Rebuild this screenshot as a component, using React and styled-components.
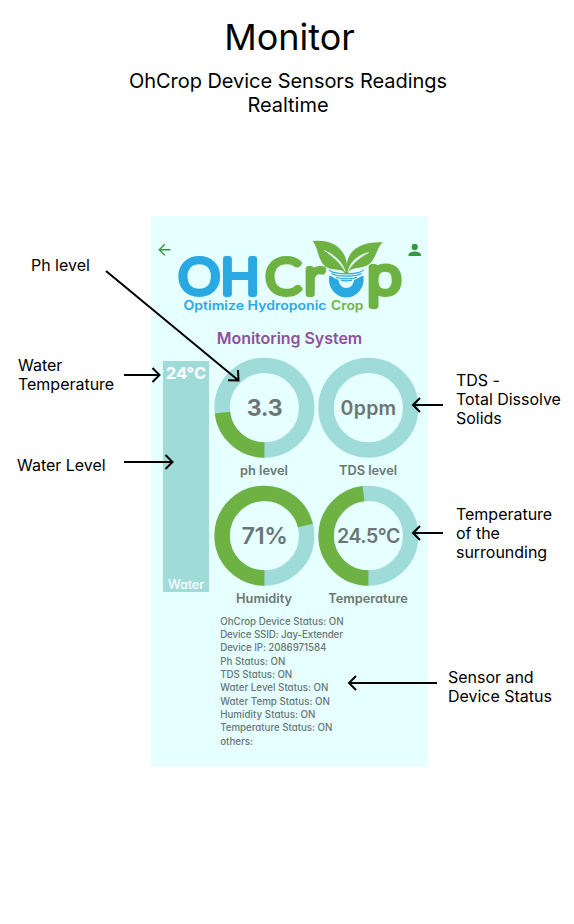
import React from "react";
import styled, { createGlobalStyle } from "styled-components";

const GlobalStyle = createGlobalStyle`
  * { box-sizing: border-box; }
  body { margin: 0; background: #fff; color: #000; font-family: Inter, sans-serif; }
`;

const Page = styled.main`
  position: relative;
  width: 574px;
  height: 924px;
  overflow: hidden;
  background: #fff;
`;

const Header = styled.header`
  height: 216px;
  padding: 15px 0 0 2px;
  text-align: center;
`;

const Title = styled.h1`
  margin: 0;
  font-size: 36px;
  line-height: 44px;
  font-weight: 400;
  text-indent: 3px;
`;

const Subtitle = styled.p`
  margin: 10px 0 0;
  font-size: 20px;
  line-height: 24px;
  letter-spacing: -0.04px;
`;

const Board = styled.div`
  display: grid;
  grid-template-columns: 151px 277px 146px;
`;

const Notes = styled.aside`
  display: flex;
  flex-direction: column;
`;

const Note = styled.p`
  margin: ${(p) => p.$top}px 0 0 ${(p) => p.$left}px;
  font-size: 16px;
  line-height: 19px;
  letter-spacing: -0.02px;
  white-space: pre;
`;

const Phone = styled.section`
  height: 551.4px;
  background: #e6ffff;
  color: #6a7675;
  font-feature-settings: "cv11";
  overflow: hidden;
`;

const TopBar = styled.div`
  height: 112px;
`;

const Heading = styled.h2`
  margin: 0;
  height: 29px;
  font-size: 16px;
  line-height: 20px;
  font-weight: 600;
  text-align: center;
  color: #91509c;
  letter-spacing: -0.05px;
`;

const Dashboard = styled.div`
  display: flex;
  padding-left: 12px;
`;

const Tank = styled.div`
  display: flex;
  flex-direction: column;
  justify-content: space-between;
  align-items: center;
  width: 46px;
  height: 231px;
  margin-top: 4.4px;
  background: #9fdbd9;
  color: #fff;
`;

const TankTemp = styled.strong`
  font-size: 16.6px;
  line-height: 24px;
  font-weight: 700;
`;

const TankLabel = styled.span`
  font-size: 12.6px;
  line-height: 15px;
  font-weight: 500;
`;

const Gauges = styled.div`
  display: grid;
  grid-template-columns: 104px 104px;
  grid-auto-rows: 128px;
  margin-left: 3px;
`;

const GaugeCell = styled.figure`
  margin: 0;
  display: flex;
  flex-direction: column;
  align-items: center;
`;

const Dial = styled.div`
  display: grid;
  place-items: center;
  width: 104px;
  height: 101px;
  flex: none;
  > * { grid-area: 1 / 1; }
`;

const Ring = styled.svg`
  overflow: visible;
`;

const Value = styled.span`
  padding: 1px 0 0 1px;
  font-size: ${(p) => p.$size}px;
  line-height: 28px;
  font-weight: ${(p) => p.$weight || 600};
  letter-spacing: ${(p) => p.$track || 0}px;
  white-space: nowrap;
`;

const Caption = styled.figcaption`
  margin-top: 4px;
  font-size: 12.8px;
  line-height: 18px;
  font-weight: 600;
  white-space: nowrap;
`;

const StatusList = styled.ul`
  margin: 1.6px 0 0 69.2px;
  padding: 0;
  list-style: none;
  font-size: 9.75px;
  line-height: 13.35px;
  font-weight: 500;
`;

const StatusLine = styled.li`
  letter-spacing: ${(p) => p.$track || 0}px;
`;

const Overlay = styled.svg`
  position: absolute;
  inset: 0;
  pointer-events: none;
`;

const GAUGES = [
  { value: "3.3", label: "ph level", sweep: 83, size: 23, weight: 700, track: -0.3 },
  { value: "0ppm", label: "TDS level", sweep: 0, size: 19.5, track: 0.3 },
  { value: "71%", label: "Humidity", sweep: 255.6, size: 23.5, track: -0.4 },
  { value: "24.5°C", label: "Temperature", sweep: 173, size: 19.5, track: -0.4 },
];

const STATUS = [
  { text: "OhCrop Device Status: ON", track: -0.01 },
  { text: "Device SSID: Jay-Extender", track: -0.12 },
  { text: "Device IP: 2086971584", track: -0.08 },
  { text: "Ph Status: ON", track: 0 },
  { text: "TDS Status: ON", track: -0.05 },
  { text: "Water Level Status: ON", track: 0 },
  { text: "Water Temp Status: ON", track: 0 },
  { text: "Humidity Status: ON", track: 0.02 },
  { text: "Temperature Status: ON", track: -0.03 },
  { text: "others:", track: 0 },
];

function Gauge({ value, label, sweep, size, weight, track }) {
  const r = 42.3;
  const c = 2 * Math.PI * r;
  return (
    <GaugeCell>
      <Dial>
        <Ring width="104" height="101" viewBox="0 0 104 101" fill="none" strokeWidth="15.4">
          <circle cx="52.4" cy="50.7" r={r} stroke="#9fdbd9" />
          {sweep > 0 && (
            <circle
              cx="52.4"
              cy="50.7"
              r={r}
              stroke="#6eb244"
              strokeDasharray={`${(c * sweep) / 360} ${c}`}
              transform="rotate(90 52.4 50.7)"
            />
          )}
        </Ring>
        <Value $size={size} $weight={weight} $track={track}>{value}</Value>
      </Dial>
      <Caption>{label}</Caption>
    </GaugeCell>
  );
}

const Letter = styled.text`
  font-family: ${(p) => p.$font || "Lato"}, sans-serif;
  font-size: ${(p) => p.$size || 49}px;
  font-weight: 300;
  stroke-width: 6px;
  stroke-linejoin: round;
  stroke-linecap: round;
`;

const Tagline = styled.text`
  font-family: Inter, sans-serif;
  font-size: 12.6px;
  font-weight: 600;
`;

function BrandBar() {
  return (
    <svg width="277" height="112" viewBox="151 216 277 112">
      <path d="M170.5 249.7H159.3M164.8 244.2L159.3 249.7l5.5 5.5" fill="none" stroke="#36993f" strokeWidth="1.4" />
      <circle cx="414.700" cy="246.900" r="3.100" fill="#36993f" />
      <path d="M408.500 256v-1.500c0-2 4-3.100 6.200-3.100s6.200 1.100 6.200 3.100v1.500z" fill="#36993f" />
      <g fill="#29a8e1" stroke="#29a8e1">
        <Letter x="178.500" y="294.200" textLength="41.500" lengthAdjust="spacingAndGlyphs">O</Letter>
        <Letter x="220.800" y="294.200" textLength="38.500" lengthAdjust="spacingAndGlyphs">H</Letter>
      </g>
      <g fill="#6eb244" stroke="#6eb244">
        <Letter x="265.500" y="294.200" textLength="35.500" lengthAdjust="spacingAndGlyphs">C</Letter>
        <Letter x="304.500" y="294.200" textLength="19" lengthAdjust="spacingAndGlyphs">r</Letter>
        <Letter x="367" y="294.200" $font="Open Sans" $size={50} textLength="34.500" lengthAdjust="spacingAndGlyphs">p</Letter>
      </g>
      <path d="M334 276.500C332.500 285 338 292.700 346.300 292.700S360 285 358.700 276.500" fill="none" stroke="#29a8e1" strokeWidth="9.500" />
      <path d="M329 267h34.500v7c-4 4-7 6-17 7-10-1-13-3-17.500-7z" fill="#e6ffff" />
      <path d="M312.700 241.300C324 239.500 334 243 339.500 248.500 344.500 253.500 346 258.500 346.800 263.500 349 251.500 358 241.500 383 242.300 376.500 247 376 261.500 366.500 265.800 360 268.500 353 267.500 348.500 271.500V273.500H345C342.500 268.500 337 270.500 329.500 268.500 317.500 264.500 319.500 250 312.700 241.300Z" fill="#6eb244" />
      <path d="M324 250.300C334 254.500 342.500 261.500 345.300 271.700 340.500 263 333 256.500 324 250.300ZM369 252.300C360 254.500 350.500 260 347.900 271.700 352 263.500 358.500 258.500 369 252.300Z" fill="#e6ffff" stroke="#e6ffff" strokeWidth=".4" />
      <path d="M329.500 269.500C330 272 337 273.800 346.300 273.800S363 272 363.500 269.500M331.500 273.500C337 277 356 277 361.500 273.500M336 277.200C342 279.300 351 279.300 357 277.200M341 280.200C344 281 349 281 352 280.200" fill="none" stroke="#29a8e1" strokeWidth="1.200" />
      <Tagline x="183.500" y="310" fill="#29a8e1" textLength="143" lengthAdjust="spacingAndGlyphs">Optimize Hydroponic</Tagline>
      <Tagline x="331" y="310" fill="#6eb244" textLength="32.500" lengthAdjust="spacingAndGlyphs">Crop</Tagline>
    </svg>
  );
}

export default function App() {
  return (
    <>
      <GlobalStyle />
      <Page>
        <Header>
          <Title>Monitor</Title>
          <Subtitle>OhCrop Device Sensors Readings<br />Realtime</Subtitle>
        </Header>
        <Board>
          <Notes>
            <Note $top={40} $left={31}>Ph level</Note>
            <Note $top={81} $left={18}>{"Water\nTemperature"}</Note>
            <Note $top={62} $left={17}>Water Level</Note>
          </Notes>
          <Phone>
            <TopBar><BrandBar /></TopBar>
            <Heading>Monitoring System</Heading>
            <Dashboard>
              <Tank>
                <TankTemp>24°C</TankTemp>
                <TankLabel>Water</TankLabel>
              </Tank>
              <Gauges>
                {GAUGES.map((g) => <Gauge key={g.label} {...g} />)}
              </Gauges>
            </Dashboard>
            <StatusList>
              {STATUS.map((s) => <StatusLine key={s.text} $track={s.track}>{s.text}</StatusLine>)}
            </StatusList>
          </Phone>
          <Notes>
            <Note $top={155} $left={28}>{"TDS -\nTotal Dissolve\nSolids"}</Note>
            <Note $top={77} $left={28}>{"Temperature\nof the\nsurrounding"}</Note>
            <Note $top={106} $left={20}>{"Sensor and\nDevice Status"}</Note>
          </Notes>
        </Board>
        <Overlay width="574" height="924" viewBox="0 0 574 924" fill="none" stroke="#000" strokeWidth="2">
          <path d="M106 271L238.500 380.500M228 380.300L238.500 380.500 238 370" />
          <path d="M124 375H159.500M152.500 368L159.500 375 152.500 382" />
          <path d="M124 462H172.500M165.500 455L172.500 462 165.500 469" />
          <path d="M443 405H413M420 398L413 405 420 412" />
          <path d="M443 533H413M420 526L413 533 420 540" />
          <path d="M437 683H349M356 676L349 683 356 690" />
        </Overlay>
      </Page>
    </>
  );
}
